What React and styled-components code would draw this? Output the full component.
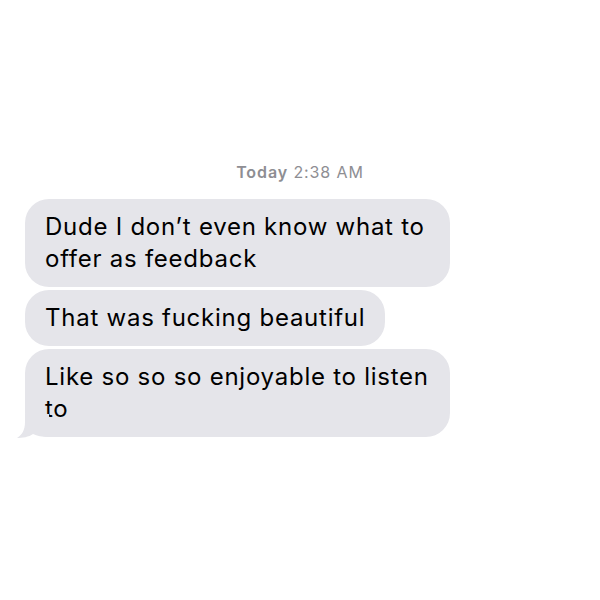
import styled, { createGlobalStyle } from 'styled-components';

const Global = createGlobalStyle`
  html, body {
    margin: 0;
    padding: 0;
    background: #fff;
  }
  body {
    font-family: Inter, "Liberation Sans", Arial, sans-serif;
  }
`;

const Thread = styled.div`
  width: 600px;
  height: 600px;
  box-sizing: border-box;
  padding: 162px 0 0 25px;
  display: flex;
  flex-direction: column;
  align-items: flex-start;
  background: #fff;
`;

const Stamp = styled.div`
  align-self: center;
  margin-left: -25px;
  font-size: 16px;
  line-height: 20px;
  letter-spacing: 0.9px;
  color: #8e8e93;
  margin-bottom: 17px;
  b {
    font-weight: 600;
  }
`;

const Bubble = styled.div`
  position: relative;
  max-width: 425px;
  box-sizing: border-box;
  padding: 12px 20px 12px 20px;
  margin-bottom: 3px;
  border-radius: 24px;
  background: #e5e5ea;
  color: #000;
  font-size: 24px;
  line-height: 32px;
  letter-spacing: 0.75px;
  ${({ wide }) => wide && 'width: 425px;'}
`;

const Tail = styled.svg`
  position: absolute;
  left: -8px;
  bottom: -1px;
`;

const Message = ({ text, last, wide }) => (
  <Bubble wide={wide}>
    {text}
    {last && (
      <Tail width="32" height="24" viewBox="0 0 32 24">
        <path
          d="M8 0 L32 0 L32 23 C25 23 20 22 16 20 C12 23 5 24 0 24 C5 21 8 16 8 8 Z"
          fill="#e5e5ea"
        />
      </Tail>
    )}
  </Bubble>
);

export default function App() {
  return (
    <>
      <Global />
      <Thread>
        <Stamp><b>Today</b> 2:38 AM</Stamp>
        <Message wide text="Dude I don’t even know what to offer as feedback" />
        <Message text="That was fucking beautiful" />
        <Message wide last text="Like so so so enjoyable to listen to" />
      </Thread>
    </>
  );
}
